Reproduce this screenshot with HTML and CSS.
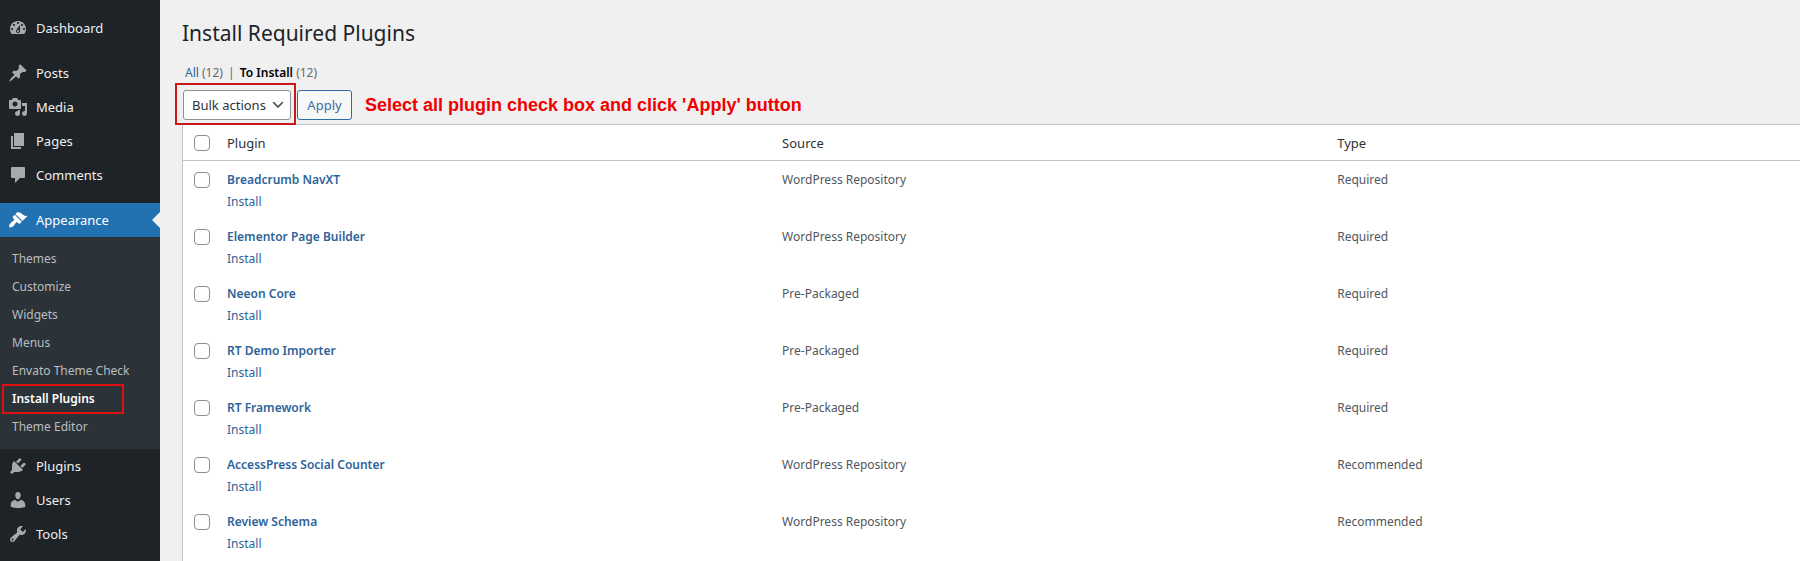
FILE: index.html
```html
<!DOCTYPE html>
<html lang="en">
<head>
<meta charset="utf-8">
<title>Install Required Plugins</title>
<link rel="stylesheet" href="styles.css">
</head>
<body>
<div class="layout">
  <nav class="sidebar" aria-label="Main menu">
    <ul class="menu">
      <li><a class="menu-link" href="#"><svg class="icon" viewBox="0 0 20 20"><path d="M3.76 16h12.48c1.1-1.37 1.76-3.11 1.76-5 0-4.42-3.58-8-8-8s-8 3.58-8 8c0 1.89.66 3.63 1.76 5zM10 4c.55 0 1 .45 1 1s-.45 1-1 1-1-.45-1-1 .45-1 1-1zM6 6c.55 0 1 .45 1 1s-.45 1-1 1-1-.45-1-1 .45-1 1-1zm8 0c.55 0 1 .45 1 1s-.45 1-1 1-1-.45-1-1 .45-1 1-1zm-5.37 5.55L12 7v6c0 1.1-.9 2-2 2s-2-.9-2-2c0-.57.24-1.08.63-1.45zM4 10c.55 0 1 .45 1 1s-.45 1-1 1-1-.45-1-1 .45-1 1-1zm12 0c.55 0 1 .45 1 1s-.45 1-1 1-1-.45-1-1 .45-1 1-1zm-5 3c0-.55-.45-1-1-1s-1 .45-1 1 .45 1 1 1 1-.45 1-1z"/></svg>Dashboard</a></li>
    </ul>
    <ul class="menu">
      <li><a class="menu-link" href="#"><svg class="icon" viewBox="0 0 20 20"><path d="M10.44 3.02l1.82-1.82 6.36 6.35-1.83 1.82c-1.05-.68-2.48-.57-3.41.36l-.75.75c-.92.93-1.04 2.35-.35 3.41l-1.83 1.82-2.41-2.41-2.8 2.79c-.42.42-3.38 2.71-3.8 2.29s1.86-3.39 2.28-3.81l2.79-2.79L4.1 9.36l1.83-1.82c1.05.69 2.48.57 3.4-.36l.75-.75c.93-.92 1.05-2.35.36-3.41z"/></svg>Posts</a></li>
      <li><a class="menu-link" href="#"><svg class="icon" viewBox="0 0 20 20"><path d="M13 11V4c0-.55-.45-1-1-1h-1.67L9 1H5L3.67 3H2c-.55 0-1 .45-1 1v7c0 .55.45 1 1 1h10c.55 0 1-.45 1-1zM7 4.5c1.38 0 2.5 1.12 2.5 2.5S8.38 9.5 7 9.5 4.5 8.38 4.5 7 5.62 4.5 7 4.5zM14 6h5v10.5c0 1.38-1.12 2.5-2.5 2.5S14 17.88 14 16.5s1.12-2.5 2.5-2.5c.17 0 .34.02.5.05V9h-3V6zm-4 8.05V13h2v3.5c0 1.38-1.12 2.5-2.5 2.5S7 17.88 7 16.5 8.12 14 9.5 14c.17 0 .34.02.5.05z"/></svg>Media</a></li>
      <li><a class="menu-link" href="#"><svg class="icon" viewBox="0 0 20 20"><path d="M6 15V2h10v13H6zm-1 1h8v2H3V5h2v11z"/></svg>Pages</a></li>
      <li><a class="menu-link" href="#"><svg class="icon" viewBox="0 0 20 20"><path d="M4 2h12q1 0 1 1v9q0 1-1 1h-4l-5 5v-5H4q-1 0-1-1V3q0-1 1-1z"/></svg>Comments</a></li>
    </ul>
    <ul class="menu">
      <li>
        <a class="menu-link current" href="#"><svg class="icon" viewBox="0 0 20 20"><path d="M14.48 11.06L7.41 3.99l1.5-1.5c.5-.56 2.3-.47 3.51.32 1.21.8 1.43 1.28 2.91 2.1 1.18.64 2.45 1.26 4.45.85zm-.71.71L6.7 4.7 4.93 6.47c-.39.39-.39 1.02 0 1.41l1.06 1.06c.39.39.39 1.03 0 1.42-.6.6-1.43 1.11-2.21 1.69-.35.26-.7.53-1.01.84C1.43 14.23.4 16.08 1.4 17.07c.99 1 2.84-.03 4.18-1.36.31-.31.58-.66.85-1.02.57-.78 1.08-1.61 1.69-2.21.39-.39 1.02-.39 1.41 0l1.06 1.06c.39.39 1.02.39 1.41 0z"/></svg>Appearance</a>
        <ul class="submenu">
          <li><a href="#">Themes</a></li>
          <li><a href="#">Customize</a></li>
          <li><a href="#">Widgets</a></li>
          <li><a href="#">Menus</a></li>
          <li><a href="#">Envato Theme Check</a></li>
          <li class="active"><a href="#">Install Plugins</a></li>
          <li><a href="#">Theme Editor</a></li>
        </ul>
      </li>
      <li><a class="menu-link" href="#"><svg class="icon" viewBox="0 0 20 20"><path d="M13.11 4.36L9.87 7.6 8 5.73l3.24-3.24c.35-.34 1.05-.2 1.56.32.52.51.66 1.21.31 1.55zm-8 1.77l.91-1.12 9.01 9.01-1.19.84c-.71.71-2.63 1.16-3.82 1.16H6.14L4.9 17.26c-.59.59-1.54.59-2.12 0-.59-.58-.59-1.53 0-2.12l1.24-1.24v-3.88c0-1.13.4-3.19 1.09-3.89zm7.26 3.97l3.24-3.24c.34-.35 1.04-.21 1.55.31.52.51.66 1.21.31 1.55l-3.24 3.25z"/></svg>Plugins</a></li>
      <li><a class="menu-link" href="#"><svg class="icon" viewBox="0 0 20 20"><path d="M10 9.25c-2.27 0-2.73-3.44-2.73-3.44C7 4.02 7.82 2 9.97 2c2.16 0 2.98 2.02 2.71 3.81 0 0-.41 3.44-2.68 3.44zm0 2.57L12.72 10c2.39 0 4.52 2.33 4.52 4.53v2.49s-3.65 1.13-7.24 1.13c-3.65 0-7.24-1.13-7.24-1.13v-2.49c0-2.25 1.94-4.48 4.47-4.48z"/></svg>Users</a></li>
      <li><a class="menu-link" href="#"><svg class="icon" viewBox="0 0 20 20"><path d="M16.68 9.77c-1.34 1.34-3.3 1.67-4.95.99l-5.41 6.52c-.99.99-2.59.99-3.58 0s-.99-2.59 0-3.57l6.52-5.42c-.68-1.65-.35-3.61.99-4.95 1.28-1.28 3.12-1.62 4.72-1.06l-2.89 2.89 2.82 2.82 2.86-2.87c.53 1.58.18 3.39-1.08 4.65zM3.81 16.21c.4.39 1.04.39 1.43 0 .4-.4.4-1.04 0-1.43-.39-.4-1.03-.4-1.43 0-.39.39-.39 1.03 0 1.43z"/></svg>Tools</a></li>
    </ul>
  </nav>
  <main class="content">
    <h1 class="title">Install Required Plugins</h1>
    <div class="filters"><a href="#">All</a> <span>(12)</span> <span class="divider">|</span> <a class="chosen" href="#">To Install</a> <span>(12)</span></div>
    <div class="toolbar">
      <div class="select-wrap">
        <select class="bulk" aria-label="Select bulk action"><option>Bulk actions</option></select>
        <svg class="chevron" viewBox="0 0 20 20"><path d="M5 6l5 5 5-5 2 1-7 7-7-7z"/></svg>
      </div>
      <button class="apply" type="button">Apply</button>
      <p class="note">Select all plugin check box and click 'Apply' button</p>
    </div>
    <table class="plugins">
      <colgroup><col class="col-check"><col class="col-wide"><col class="col-wide"><col></colgroup>
      <thead>
        <tr><th><input type="checkbox" aria-label="Select all"></th><th>Plugin</th><th>Source</th><th>Type</th></tr>
      </thead>
      <tbody>
        <tr><td><input type="checkbox" aria-label="Select Breadcrumb NavXT"></td><td><a class="name" href="#">Breadcrumb NavXT</a><a class="install" href="#">Install</a></td><td>WordPress Repository</td><td>Required</td></tr>
        <tr><td><input type="checkbox" aria-label="Select Elementor Page Builder"></td><td><a class="name" href="#">Elementor Page Builder</a><a class="install" href="#">Install</a></td><td>WordPress Repository</td><td>Required</td></tr>
        <tr><td><input type="checkbox" aria-label="Select Neeon Core"></td><td><a class="name" href="#">Neeon Core</a><a class="install" href="#">Install</a></td><td>Pre-Packaged</td><td>Required</td></tr>
        <tr><td><input type="checkbox" aria-label="Select RT Demo Importer"></td><td><a class="name" href="#">RT Demo Importer</a><a class="install" href="#">Install</a></td><td>Pre-Packaged</td><td>Required</td></tr>
        <tr><td><input type="checkbox" aria-label="Select RT Framework"></td><td><a class="name" href="#">RT Framework</a><a class="install" href="#">Install</a></td><td>Pre-Packaged</td><td>Required</td></tr>
        <tr><td><input type="checkbox" aria-label="Select AccessPress Social Counter"></td><td><a class="name" href="#">AccessPress Social Counter</a><a class="install" href="#">Install</a></td><td>WordPress Repository</td><td>Recommended</td></tr>
        <tr><td><input type="checkbox" aria-label="Select Review Schema"></td><td><a class="name" href="#">Review Schema</a><a class="install" href="#">Install</a></td><td>WordPress Repository</td><td>Recommended</td></tr>
      </tbody>
    </table>
  </main>
</div>
</body>
</html>
```
FILE: styles.css
```css
* { box-sizing: border-box; }

body {
  margin: 0;
  background: #f0f0f1;
  color: #3c434a;
  font: 13px/20px "Noto Sans", "Open Sans", sans-serif;
}

a { color: #2e6399; text-decoration: none; }
ul { margin: 0; padding: 0; list-style: none; }

.layout { display: flex; min-height: 100vh; }

.sidebar {
  display: flex;
  flex: none;
  flex-direction: column;
  gap: 11px;
  width: 160px;
  padding-top: 11px;
  background: #1d2327;
}

.menu-link {
  display: flex;
  align-items: center;
  gap: 8px;
  height: 34px;
  padding-left: 8px;
  color: #f0f0f1;
  font-size: 13px;
}

.icon { width: 20px; height: 20px; fill: #a7aaad; }

.current { position: relative; background: #2271b1; color: #fff; }
.current .icon { fill: #fff; }
.current::after {
  content: "";
  position: absolute;
  top: 9px;
  right: 0;
  border: 8px solid transparent;
  border-left-width: 0;
  border-right-color: #f0f0f1;
}

.submenu { padding: 8px 0; background: #2c3338; }
.submenu a {
  display: block;
  padding: 4px 12px;
  color: #b9bdc1;
  font-size: 12px;
}
.submenu .active { position: relative; }
.submenu .active a { color: #fff; font-weight: 600; }
.submenu .active::after {
  content: "";
  position: absolute;
  inset: -1px 36px -1px 2px;
  border: 2px solid #e01010;
}

.content { flex: 1; min-width: 0; padding: 18px 0 0 22px; }

.title {
  margin: 0;
  color: #1d2327;
  font-size: 21px;
  font-weight: 400;
  line-height: 30px;
}

.filters {
  padding: 15px 0 7px 3px;
  color: #646970;
  font-size: 12px;
}
.filters .divider { margin: 0 2px; }
.filters .chosen { color: #000; font-weight: 600; }

.toolbar { display: flex; align-items: center; gap: 6px; height: 34px; padding: 0 0 4px 1px; }

.select-wrap { position: relative; }
.select-wrap::after {
  content: "";
  position: absolute;
  inset: -7px -5px -5px -8px;
  border: 2px solid #c8161b;
  pointer-events: none;
}
.bulk {
  display: block;
  width: 108px;
  height: 30px;
  padding: 0 24px 0 8px;
  border: 1px solid #8c8f94;
  border-radius: 3px;
  background: #fff;
  color: #2c3338;
  font: inherit;
  appearance: none;
}
.chevron {
  position: absolute;
  top: 7px;
  right: 5px;
  width: 16px;
  height: 16px;
  fill: #555;
  pointer-events: none;
}
.apply {
  width: 55px;
  height: 30px;
  padding: 0;
  border: 1px solid #2e6da4;
  border-radius: 3px;
  background: #f6f7f7;
  color: #3a6ea5;
  font: inherit;
}
.note {
  margin: 0 0 0 7px;
  color: #f00000;
  font: bold 18px/30px "Liberation Sans", Arial, sans-serif;
}

.plugins {
  width: 100%;
  border: 1px solid #c3c4c7;
  border-width: 1px 0 0 1px;
  border-spacing: 0;
  background: #fff;
  table-layout: fixed;
}
.col-check { width: 34px; }
.col-wide { width: 34.33%; }

.plugins th, .plugins td {
  padding: 8px 10px 7px;
  color: #50575e;
  font-size: 12px;
  font-weight: 400;
  text-align: left;
  vertical-align: top;
}
.plugins th { border-bottom: 1px solid #c3c4c7; color: #2c3338; font-size: 13px; }
.plugins tbody td { padding-top: 9px; padding-bottom: 6px; }
.plugins tbody tr:last-child td { padding-bottom: 8px; }
.plugins th:first-child, .plugins td:first-child { padding: 10px 0 0 11px; }
.plugins tbody td:first-child { padding-top: 11px; }
.plugins input {
  display: block;
  width: 16px;
  height: 16px;
  margin: 0;
  border: 1px solid #8c8f94;
  border-radius: 4px;
  background: #fff;
  appearance: none;
}
.name { display: block; font-weight: 600; }
.install { display: inline-block; margin-top: 2px; }
```
